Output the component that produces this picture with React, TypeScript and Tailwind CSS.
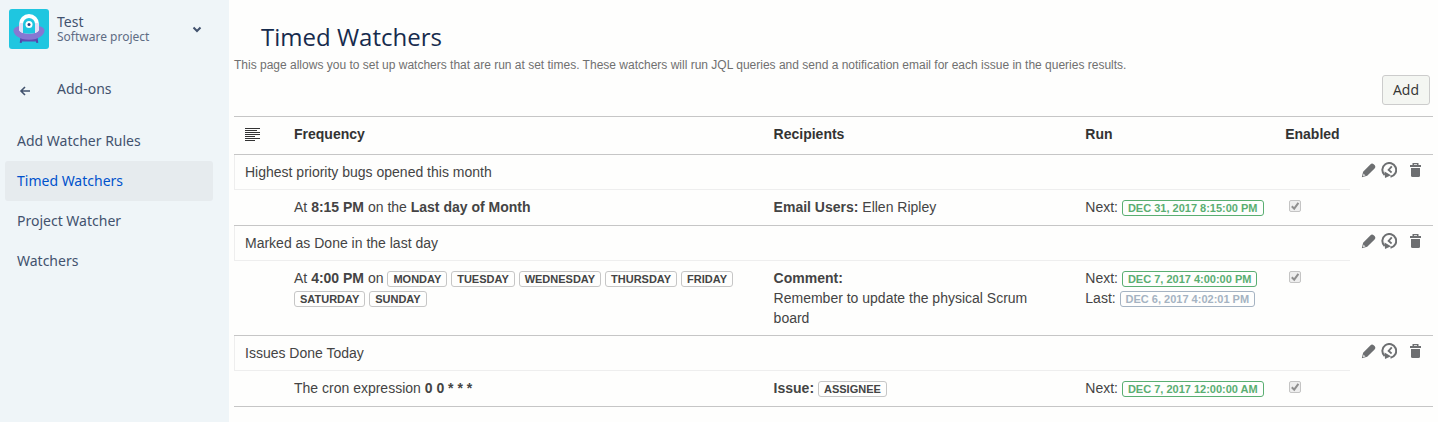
import type { ReactNode } from "react";

interface Rule {
  id: string;
  summary: string;
  frequency: ReactNode;
  recipients: ReactNode;
  next: string;
  last?: string;
}

const navItems = ["Add Watcher Rules", "Timed Watchers", "Project Watcher", "Watchers"];

function Badge({ children, tone = "default" }: { children: ReactNode; tone?: "default" | "next" | "last" }) {
  const tones = {
    default: "border-[#c6c6c6] text-[#444444]",
    next: "border-[#5aae72] text-[#5aae72]",
    last: "border-[#a5b3c2] text-[#a5b3c2]",
  };
  return (
    <span
      className={`inline-block h-4 whitespace-nowrap rounded-[3px] border px-[5px] align-middle text-[11px] leading-[14px] font-bold uppercase ${tones[tone]}`}
    >
      {children}
    </span>
  );
}

const days = ["Monday", "Tuesday", "Wednesday", "Thursday", "Friday", "Saturday", "Sunday"];

const rules: Rule[] = [
  {
    id: "bugs",
    summary: "Highest priority bugs opened this month",
    frequency: (
      <>
        At <b>8:15 PM</b> on the <b>Last day of Month</b>
      </>
    ),
    recipients: (
      <>
        <b>Email Users:</b> Ellen Ripley
      </>
    ),
    next: "Dec 31, 2017 8:15:00 PM",
  },
  {
    id: "done-last-day",
    summary: "Marked as Done in the last day",
    frequency: (
      <>
        At <b>4:00 PM</b> on{" "}
        {days.map((day) => (
          <span key={day}>
            <Badge>{day}</Badge>{" "}
          </span>
        ))}
      </>
    ),
    recipients: (
      <>
        <b>Comment:</b>
        <br />
        Remember to update the physical Scrum board
      </>
    ),
    next: "Dec 7, 2017 4:00:00 PM",
    last: "Dec 6, 2017 4:02:01 PM",
  },
  {
    id: "done-today",
    summary: "Issues Done Today",
    frequency: (
      <>
        The cron expression <b>0 0 * * *</b>
      </>
    ),
    recipients: (
      <>
        <b>Issue:</b> <Badge>Assignee</Badge>
      </>
    ),
    next: "Dec 7, 2017 12:00:00 AM",
  },
];

function ProjectAvatar() {
  return (
    <svg className="h-10 w-10 shrink-0" viewBox="0 0 40 40" aria-hidden="true">
      <rect width="40" height="40" rx="3" fill="#1fc6e0" />
      <path d="M12.500 29l-.8 4.800M27.500 29l.8 4.800" stroke="#5244aa" strokeWidth="2" />
      <path d="M11 28h18l-2 4.500H13z" fill="#5e4db2" />
      <path d="M4.500 21.500C4.500 18 10 16 20 16s15.500 2 15.500 5.500c0 4.500-6 9.300-15.500 9.300S4.500 26 4.500 21.500z" fill="#8777d2" />
      <path d="M10 15a10 10 0 0 1 20 0v5c0 3-4 4.600-10 4.600S10 23 10 20z" fill="#fff" />
      <path d="M10 14v6c0 2 1.500 3.300 4 4V14zM30 14v6c0 2-1.500 3.300-4 4V14z" fill="#e3dff5" />
      <path d="M14 15a6 6 0 0 1 12 0v9q-6 1.400-12 0z" fill="#1fc6e0" />
      <circle cx="20" cy="15.500" r="3.500" fill="#fff" />
      <circle cx="20" cy="15.500" r="1.500" fill="#2a3f80" />
    </svg>
  );
}

function PencilIcon() {
  return (
    <svg className="h-4 w-4" viewBox="0 0 16 16" aria-hidden="true">
      <path
        d="M9.300 2.500a2.500 2.500 0 0 1 3.400-.3l1.100 1.100a2.500 2.500 0 0 1-.2 3.300L6.200 13.700l-5.400 1.500 1.300-5.400z"
        fill="#6d6f71"
      />
      <path d="M2.500 11.500l2 2-2.200.7-.5-.5z" fill="#d8d9da" />
    </svg>
  );
}

function RunIcon() {
  return (
    <svg className="h-4 w-4" viewBox="0 0 16 16" aria-hidden="true">
      <path d="M3.600 13A6.900 6.900 0 1 1 9.500 14.700" fill="none" stroke="#6d6f71" strokeWidth="2" />
      <path d="M10.800 4.300L7.600 8l3 2.500" fill="none" stroke="#6d6f71" strokeWidth="1.800" />
      <path d="M3.500 9.500l6.500 3.700L4 16z" fill="#6d6f71" />
    </svg>
  );
}

function TrashIcon() {
  return (
    <svg className="h-4 w-4" viewBox="0 0 16 16" aria-hidden="true">
      <path d="M3 3h2.500V1h6v2H14v2H3zM7 2.200V3h3v-.8z" fill="#6d6f71" fillRule="evenodd" />
      <path d="M4 6h9v7.500a1.500 1.500 0 0 1-1.500 1.500h-6A1.500 1.500 0 0 1 4 13.500z" fill="#6d6f71" />
    </svg>
  );
}

function EnabledBox({ label }: { label: string }) {
  return (
    <span className="mt-[3px] grid h-3 w-3">
      <input
        type="checkbox"
        aria-label={label}
        defaultChecked
        disabled
        className="col-start-1 row-start-1 h-3 w-3 appearance-none rounded-xs border border-[#c4c4c4] bg-[#eeeeee]"
      />
      <svg className="pointer-events-none col-start-1 row-start-1 h-3 w-3" viewBox="0 0 12 12" aria-hidden="true">
        <path d="M2.800 6.200l2.400 2.500 4.200-5.900" fill="none" stroke="#8f8f8f" strokeWidth="2" />
      </svg>
    </span>
  );
}

function Sidebar() {
  return (
    <aside className="w-[229px] shrink-0 bg-[#eff5f8] font-['Noto_Sans',sans-serif] text-sm text-[#42526e]">
      <button type="button" className="flex w-full items-center pt-[9px] pr-[26px] pl-[9px] text-left">
        <ProjectAvatar />
        <span className="ml-2 flex-1">
          <span className="block leading-4">Test</span>
          <span className="block text-xs leading-[14px] text-[#5e6c84]">Software project</span>
        </span>
        <svg className="h-3 w-3" viewBox="0 0 12 12" aria-hidden="true">
          <path d="M2.500 4.500L6 8l3.500-3.500" fill="none" stroke="#42526e" strokeWidth="2" />
        </svg>
      </button>
      <a href="#addons" className="mt-[30px] flex h-5 items-center pl-[19px]">
        <svg className="mt-1 h-3 w-3" viewBox="0 0 12 12" aria-hidden="true">
          <path d="M11 6H2M6 2L2 6l4 4" fill="none" stroke="#42526e" strokeWidth="1.600" />
        </svg>
        <span className="ml-[26px]">Add-ons</span>
      </a>
      <nav className="mt-[22px] mr-4 ml-[5px]">
        {navItems.map((item) => (
          <a
            key={item}
            href="#"
            aria-current={item === "Timed Watchers" ? "page" : undefined}
            className={`flex h-10 items-center rounded-[3px] px-3 ${
              item === "Timed Watchers" ? "bg-[#e6ebee] text-[#0052cc]" : ""
            }`}
          >
            {item}
          </a>
        ))}
      </nav>
    </aside>
  );
}

export default function App() {
  return (
    <div className="flex min-h-screen bg-[#fefefd] font-['Liberation_Sans',Arial,sans-serif] text-sm leading-5 text-[#444444]">
      <Sidebar />
      <main className="min-w-0 flex-1 px-[5px] pt-[23px]">
        <h1 className="pl-[27px] font-['Open_Sans',sans-serif] text-2xl leading-7 text-[#172b4d]">Timed Watchers</h1>
        <p className="mt-1 text-xs leading-5 text-[#707070]">
          This page allows you to set up watchers that are run at set times. These watchers will run JQL queries and
          send a notification email for each issue in the queries results.
        </p>
        <div className="mr-[3px] flex justify-end">
          <button
            type="button"
            className="h-[30px] rounded-[3px] border border-[#cccccc] bg-[#f4f6f2] px-2.5 font-['Open_Sans',sans-serif] text-[#333333]"
          >
            Add
          </button>
        </div>

        <table className="mt-[11px] w-full table-fixed border-separate border-spacing-0 border-t border-[#c6c6c6] text-left">
          <colgroup>
            <col className="w-[50px]" />
            <col className="w-[40%]" />
            <col className="w-[26%]" />
            <col className="w-1/6" />
            <col />
            <col className="w-[83px]" />
          </colgroup>
          <thead>
            <tr className="text-[#333333] [&>th]:border-b [&>th]:border-[#c6c6c6] [&>th]:px-2.5 [&>th]:pt-[7px] [&>th]:pb-2.5">
              <th aria-label="Summary">
                <svg className="ml-px h-[15px] w-[15px]" viewBox="0 0 15 15" aria-hidden="true">
                  <path
                    d="M0 1.500h15M0 3.500h12M0 5.500h15M0 7.500h15M0 9.500h10M0 11.500h15M0 13.500h10"
                    stroke="#333333"
                    strokeWidth="1"
                  />
                </svg>
              </th>
              <th>Frequency</th>
              <th>Recipients</th>
              <th>Run</th>
              <th>Enabled</th>
              <th aria-label="Actions" />
            </tr>
          </thead>
          {rules.map((rule) => (
            <tbody key={rule.id}>
              <tr>
                <td colSpan={5} className="border-b border-l border-[#eeeeee] px-2.5 py-[7px]">
                  {rule.summary}
                </td>
                <td rowSpan={2} className="border-b border-[#c6c6c6] pt-[7px] pl-[11px] align-top">
                  <div className="flex">
                    <button type="button" aria-label="Edit">
                      <PencilIcon />
                    </button>
                    <button type="button" aria-label="Run now" className="ml-1">
                      <RunIcon />
                    </button>
                    <button type="button" aria-label="Delete" className="ml-2.5">
                      <TrashIcon />
                    </button>
                  </div>
                </td>
              </tr>
              <tr className="align-top [&>td]:h-9 [&>td]:border-b [&>td]:border-[#c6c6c6] [&>td]:pt-[7px] [&>td]:pb-[7px]">
                <td />
                <td className="px-2.5">{rule.frequency}</td>
                <td className="px-2.5">{rule.recipients}</td>
                <td className="px-2.5 whitespace-nowrap">
                  <div>
                    Next: <Badge tone="next">{rule.next}</Badge>
                  </div>
                  {rule.last && (
                    <div>
                      Last: <Badge tone="last">{rule.last}</Badge>
                    </div>
                  )}
                </td>
                <td className="px-3.5">
                  <EnabledBox label={`${rule.summary} enabled`} />
                </td>
              </tr>
            </tbody>
          ))}
        </table>
      </main>
    </div>
  );
}
